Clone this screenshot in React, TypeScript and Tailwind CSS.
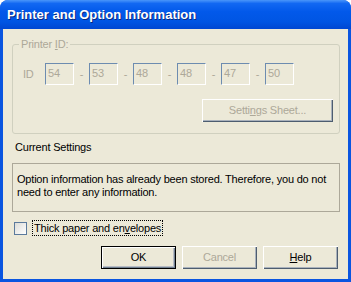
import React from "react";

const font = { fontFamily: '"Liberation Sans", Arial, sans-serif' };

const ids = ["54", "53", "48", "48", "47", "50"];

const IdBox = ({ value }: { value: string }) => (
  <div className="w-[29px] h-[22px] border-t border-l border-t-[#6d8cb0] border-l-[#6d8cb0] border-r border-b border-r-white border-b-white pl-[2px] pt-[3px] text-[11px] leading-[13px] text-[#aca899]">
    {value}
  </div>
);

const XpButton = ({
  children,
  isDefault,
  disabled,
}: {
  children: React.ReactNode;
  isDefault?: boolean;
  disabled?: boolean;
}) => (
  <button
    className={
      "w-[75px] h-[23px] flex items-center justify-center text-[11px] leading-[13px] bg-[#ece9d8] " +
      (isDefault
        ? "border border-black shadow-[inset_1px_1px_#ffffff,inset_-1px_-1px_#6f7f90,inset_-2px_-2px_#b8bcc4] text-black"
        : "shadow-[inset_1px_1px_#ffffff,inset_-1px_-1px_#4d5d70,inset_-2px_-2px_#aab2bc] ") +
      (disabled ? " text-[#aca899]" : " text-black")
    }
  >
    {children}
  </button>
);

export default function App() {
  return (
    <div className="w-[351px] h-[282px] bg-white" style={font}>
      <div className="w-[351px] h-[282px] flex flex-col rounded-t-[8px] overflow-hidden bg-[#0a55e0]">
        <div className="h-[29px] shrink-0 flex items-center pl-[7px] bg-[linear-gradient(to_bottom,#4a96fa_0%,#1268f2_12%,#0259ea_40%,#0055e3_75%,#0047d2_100%)]">
          <span className="text-white font-bold text-[13px] leading-[16px] [text-shadow:1px_1px_#0a2a80]">
            Printer and Option Information
          </span>
        </div>
        <div className="flex-1 border-x-[3px] border-b-[3px] border-[#0a55e0] bg-[#ece9d8] flex flex-col text-[11px] leading-[13px] tracking-[-0.2px]">
          {/* Printer ID group */}
          <div className="mt-[15px] ml-[9px] w-[328px] h-[90px] border border-[#d0d0bf] rounded-[3px] flex flex-col">
            <span className="block w-fit ml-[6px] -mt-[7px] px-[2px] bg-[#ece9d8] text-[#aca899]">
              Printer <span className="underline">I</span>D:
            </span>
            <div className="mt-[12px] pl-[10px] flex items-center">
              <span className="w-[22px] text-[#aca899]">ID</span>
              {ids.map((v, i) => (
                <React.Fragment key={i}>
                  {i > 0 && (
                    <span className="w-[15px] text-center text-[#aca899]">-</span>
                  )}
                  <IdBox value={v} />
                </React.Fragment>
              ))}
            </div>
            <div className="mt-[14px] flex justify-end pr-[6px]">
              <button className="w-[131px] h-[23px] flex items-center justify-center bg-[#ece9d8] text-[#aca899] shadow-[inset_1px_1px_#ffffff,inset_-1px_-1px_#4d5d70,inset_-2px_-2px_#aab2bc]">
                Setti<span className="underline">n</span>gs Sheet...
              </button>
            </div>
          </div>

          <div className="mt-[7px] ml-[12px] text-black">Current Settings</div>

          <div className="mt-[9px] ml-[9px] w-[328px] h-[49px] border border-[#aca899] pl-[4px] pt-[9px] text-black">
            Option information has already been stored. Therefore, you do not need to enter any information.
          </div>

          <div className="mt-[8px] ml-[11px] flex items-center">
            <div className="w-[13px] h-[13px] border border-[#5b7a9c] bg-[linear-gradient(135deg,#dcdcd7,#ffffff)]" />
            <span className="ml-[5px] h-[16px] px-[1px] border border-dotted border-black flex items-center text-black">
              Thick paper and en<span className="underline">v</span>elopes
            </span>
          </div>

          <div className="mt-[10px] flex justify-end gap-[6px] pr-[10px]">
            <XpButton isDefault>OK</XpButton>
            <XpButton disabled>Cancel</XpButton>
            <XpButton>
              <span className="underline">H</span>elp
            </XpButton>
          </div>
        </div>
      </div>
    </div>
  );
}
